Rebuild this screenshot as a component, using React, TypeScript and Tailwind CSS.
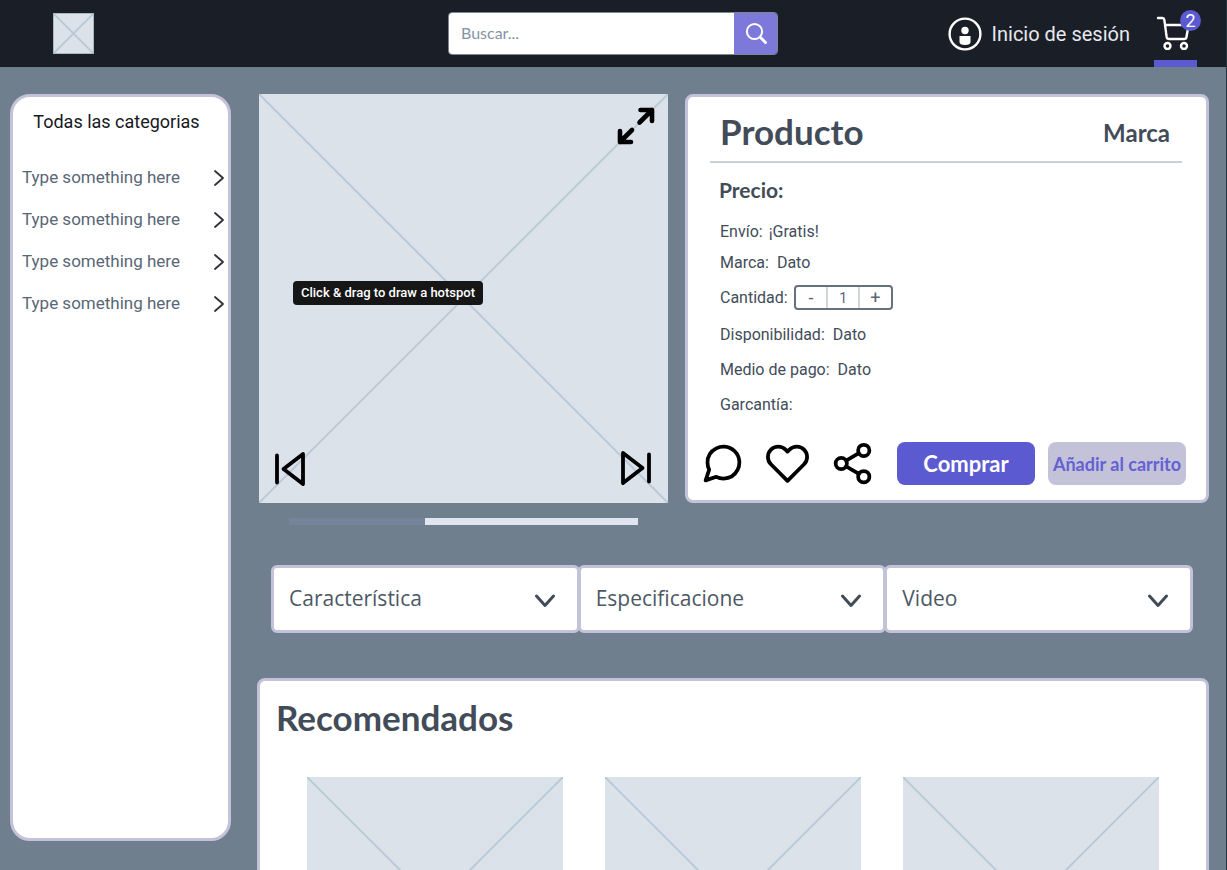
import type { ReactNode } from "react";

const categories = ["Type something here", "Type something here", "Type something here", "Type something here"];
const sections = ["Característica", "Especificacione", "Video"];

function Placeholder({ className }: { className: string }) {
  return (
    <svg viewBox="0 0 100 100" preserveAspectRatio="none" aria-hidden="true" className={`block bg-[#dbe2ea] ${className}`}>
      <path d="M0 0 100 100M100 0 0 100" fill="none" stroke="#bccad8" strokeWidth="2" vectorEffect="non-scaling-stroke" />
    </svg>
  );
}

function ActionIcon({ label, children }: { label: string; children: ReactNode }) {
  return (
    <button type="button" aria-label={label} className="text-black">
      <svg viewBox="0 0 24 24" fill="none" stroke="currentColor" strokeWidth="2" strokeLinecap="round" strokeLinejoin="round" className="size-[45px]">
        {children}
      </svg>
    </button>
  );
}

function Header() {
  return (
    <header className="grid h-[67px] shrink-0 grid-cols-[1fr_330px_1fr] items-center bg-[#1a1e26]">
      <a href="#inicio" aria-label="Inicio" className="ml-[53px] w-fit border border-[#a9b6c3]">
        <Placeholder className="size-[39px]" />
      </a>
      <form className="flex h-[43px] overflow-hidden rounded border border-[#7b8794]">
        <input
          type="search"
          aria-label="Buscar"
          placeholder="Buscar..."
          className="min-w-0 flex-1 bg-white px-3 pb-0.5 font-['Lato',sans-serif] text-base text-[#424c59] outline-none placeholder:text-[#8492a6]"
        />
        <button type="button" aria-label="Buscar" className="flex w-[43px] items-center justify-center bg-[#7c79db] text-white">
          <svg viewBox="0 0 24 24" fill="none" stroke="currentColor" strokeLinecap="round" className="size-6">
            <circle cx="10.500" cy="9.500" r="7.600" strokeWidth="2" />
            <path d="m16.500 15.500 5 5" strokeWidth="3" />
          </svg>
        </button>
      </form>
      <div className="flex h-full items-center justify-end pr-[29px]">
        <a href="#sesion" className="flex items-center gap-2.5 text-xl text-[#e6e9ee]">
          <svg viewBox="0 0 34 34" className="size-[34px]" aria-hidden="true">
            <circle cx="17" cy="17" r="15.400" fill="none" stroke="#fff" strokeWidth="2.400" />
            <circle cx="17" cy="13.500" r="3.700" fill="#fff" />
            <path d="M11.500 19h11v6q0 3-5.500 3t-5.500-3z" fill="#fff" />
          </svg>
          <span>Inicio de sesión</span>
        </a>
        <a href="#carrito" aria-label="Carrito" className="relative ml-6 flex h-full w-[43px] items-center border-b-[7px] border-[#5c5ad0] pl-0.5 pt-[5px]">
          <svg viewBox="0 0 34 34" fill="none" stroke="#fff" strokeWidth="2.400" strokeLinecap="round" strokeLinejoin="round" className="size-[34px]">
            <path d="M2 2h4.500q1.500 0 1.800 1.700l2.300 17q.4 2.300 2.600 2.300h15q2 0 2.300-2L32.500 9H9" />
            <circle cx="11.500" cy="30" r="3" />
            <circle cx="28" cy="30" r="3" />
          </svg>
          <span className="absolute -right-1 top-2.5 flex size-[21px] items-center justify-center rounded-full bg-[#5c5ad0] text-lg leading-none text-white">2</span>
        </a>
      </div>
    </header>
  );
}

function Sidebar() {
  return (
    <nav aria-label="Categorias" className="h-[747px] w-[221px] shrink-0 rounded-[20px] border-[3px] border-[#c3c2d9] bg-white">
      <h2 className="mt-[11px] text-center text-lg leading-7 text-[#16191e]">
        <span className="pr-2">Todas las categorias</span>
      </h2>
      <ul className="mt-[21px]">
        {categories.map((name, i) => (
          <li key={i}>
            <a href="#categoria" className="flex h-[42px] items-center justify-between pl-[9px] pr-[3px] text-[17px] text-[#596675]">
              {name}
              <svg viewBox="0 0 12 18" fill="none" stroke="#2d3036" strokeWidth="1.800" strokeLinecap="round" strokeLinejoin="round" className="h-[18px] w-3">
                <path d="m2 2 8 7-8 7" />
              </svg>
            </a>
          </li>
        ))}
      </ul>
    </nav>
  );
}

function Gallery() {
  return (
    <section aria-label="Imágenes" className="w-[409px] shrink-0">
      <div className="relative">
        <Placeholder className="aspect-square w-full" />
        <button type="button" aria-label="Ampliar" className="absolute right-3 top-3">
          <svg viewBox="0 0 40 40" fill="none" stroke="#000" strokeWidth="4.600" strokeLinecap="round" strokeLinejoin="round" className="size-10">
            <path d="M24.500 4H36V15M36 4 23.500 16.500M4 25V36H15M4 36 16 24" />
          </svg>
        </button>
        <span role="tooltip" className="absolute left-[34px] top-[187px] whitespace-nowrap rounded bg-[#161616] px-2 text-[13px] font-medium leading-6 text-white">
          Click &amp; drag to draw a hotspot
        </span>
        <button type="button" aria-label="Anterior" className="absolute bottom-4 left-[15px]">
          <svg viewBox="0 0 34 36" fill="none" stroke="#000" strokeWidth="3.800" strokeLinecap="round" strokeLinejoin="round" className="h-9 w-[34px]">
            <path d="M3 4.500v27M29 3 9.500 18 29 33z" />
          </svg>
        </button>
        <button type="button" aria-label="Siguiente" className="absolute bottom-[17px] right-[15px]">
          <svg viewBox="0 0 34 36" fill="none" stroke="#000" strokeWidth="3.800" strokeLinecap="round" strokeLinejoin="round" className="h-9 w-[34px]">
            <path d="M30 4.500v27M4 3l19.500 15L4 33z" />
          </svg>
        </button>
      </div>
      <div className="mx-[30px] mt-[15px] flex h-[7px]">
        <div className="w-[39%] bg-[#75839b]" />
        <div className="flex-1 bg-[#e1e5f0]" />
      </div>
    </section>
  );
}

function ProductCard() {
  return (
    <section className="h-[409px] min-w-0 flex-1 rounded-lg border-[3px] border-[#c3c2d9] bg-white text-[#424c59]">
      <div className="ml-[22px] mr-6 flex h-[66px] items-center justify-between border-b-2 border-[#c5d0d8] pl-2.5 pr-3 pt-1 font-['Lato',sans-serif] font-bold">
        <h1 className="text-[35px]">Producto</h1>
        <p className="pt-1 text-2xl">Marca</p>
      </div>
      <div className="pl-8 text-base">
        <h2 className="-ml-px mt-[11px] font-['Lato',sans-serif] text-[21px] font-bold leading-8">Precio:</h2>
        <p className="mt-2.5 flex h-[31px] items-center gap-1.5"><span>Envío:</span><span>¡Gratis!</span></p>
        <p className="flex h-[31px] items-center gap-2"><span>Marca:</span><span>Dato</span></p>
        <div className="flex h-[39px] items-center gap-1.5">
          <label htmlFor="cantidad">Cantidad:</label>
          <div className="flex h-[25px] w-[99px] overflow-hidden rounded border-2 border-[#65717e] text-[#596675]">
            <button type="button" aria-label="Menos" className="flex-1 text-lg leading-5">-</button>
            <input id="cantidad" defaultValue="1" className="w-[34px] border-x-2 border-[#d3d6da] text-center text-sm outline-none" />
            <button type="button" aria-label="Más" className="flex-1 text-lg leading-5">+</button>
          </div>
        </div>
        <p className="flex h-[35px] items-center gap-2"><span>Disponibilidad:</span><span>Dato</span></p>
        <p className="flex h-[35px] items-center gap-2"><span>Medio de pago:</span><span>Dato</span></p>
        <p className="flex h-[35px] items-center">Garcantía:</p>
      </div>
      <div className="mt-[19px] flex items-center pl-3 pr-5">
        <div className="flex gap-5">
          <ActionIcon label="Comentar">
            <path d="M21 11.500a8.380 8.380 0 0 1-.9 3.800 8.500 8.500 0 0 1-7.600 4.700 8.380 8.380 0 0 1-3.800-.9L3 21l1.900-5.700a8.380 8.380 0 0 1-.9-3.800 8.500 8.500 0 0 1 4.700-7.600 8.380 8.380 0 0 1 3.800-.9h.5a8.480 8.480 0 0 1 8 8v.5z" />
          </ActionIcon>
          <ActionIcon label="Favorito">
            <path d="M20.840 4.610a5.500 5.500 0 0 0-7.780 0L12 5.670l-1.060-1.060a5.500 5.500 0 0 0-7.780 7.780l1.060 1.060L12 21.230l7.780-7.780 1.060-1.060a5.500 5.500 0 0 0 0-7.780z" />
          </ActionIcon>
          <ActionIcon label="Compartir">
            <circle cx="18" cy="5" r="3" />
            <circle cx="6" cy="12" r="3" />
            <circle cx="18" cy="19" r="3" />
            <path d="m8.590 13.510 6.830 3.980M15.410 6.510l-6.820 3.980" />
          </ActionIcon>
        </div>
        <div className="ml-[22px] grid flex-1 grid-cols-2 gap-[13px] whitespace-nowrap font-['Lato',sans-serif] font-bold">
          <button type="button" className="h-[43px] rounded-lg bg-[#5c5ad0] text-[22px] text-white">Comprar</button>
          <button type="button" className="h-[43px] rounded-lg bg-[#c3c2d9] text-lg text-[#6461d2]">Añadir al carrito</button>
        </div>
      </div>
    </section>
  );
}

export default function App() {
  return (
    <div className="flex h-screen flex-col overflow-y-auto border-r border-[#253442] bg-[#707f8d] font-['Roboto',sans-serif] [scrollbar-width:none]">
      <Header />
      <div className="flex gap-[26px] pb-7 pl-2.5 pr-[17px] pt-[27px]">
        <Sidebar />
        <main className="min-w-0 flex-1">
          <div className="flex items-start gap-[17px] pl-0.5">
            <Gallery />
            <ProductCard />
          </div>
          <div className="mt-10 flex pl-3.5 pr-4">
            {sections.map((title) => (
              <button key={title} type="button" aria-expanded="false" className="flex h-[68px] min-w-0 flex-1 items-center justify-between rounded-md border-[3px] border-[#c3c2d9] bg-white pl-[15px] pr-[21px] font-['Open_Sans',sans-serif] text-[21px] text-[#4d5865] not-last:-mr-0.5">
                {title}
                <svg viewBox="0 0 22 14" fill="none" stroke="#424c59" strokeWidth="3" strokeLinecap="round" strokeLinejoin="round" className="mt-1 h-3.5 w-[22px]">
                  <path d="m2.500 2 8.500 9.500L19.500 2" />
                </svg>
              </button>
            ))}
          </div>
          <section className="mt-[45px] rounded-lg border-[3px] border-[#c3c2d9] bg-white pb-12">
            <h2 className="pl-4 pt-3.5 font-['Lato',sans-serif] text-[35px] font-bold leading-[44px] text-[#424c59]">Recomendados</h2>
            <div className="mt-[38px] grid grid-cols-3 gap-[42px] px-[47px]">
              <Placeholder className="aspect-square w-full" />
              <Placeholder className="aspect-square w-full" />
              <Placeholder className="aspect-square w-full" />
            </div>
          </section>
        </main>
      </div>
    </div>
  );
}
